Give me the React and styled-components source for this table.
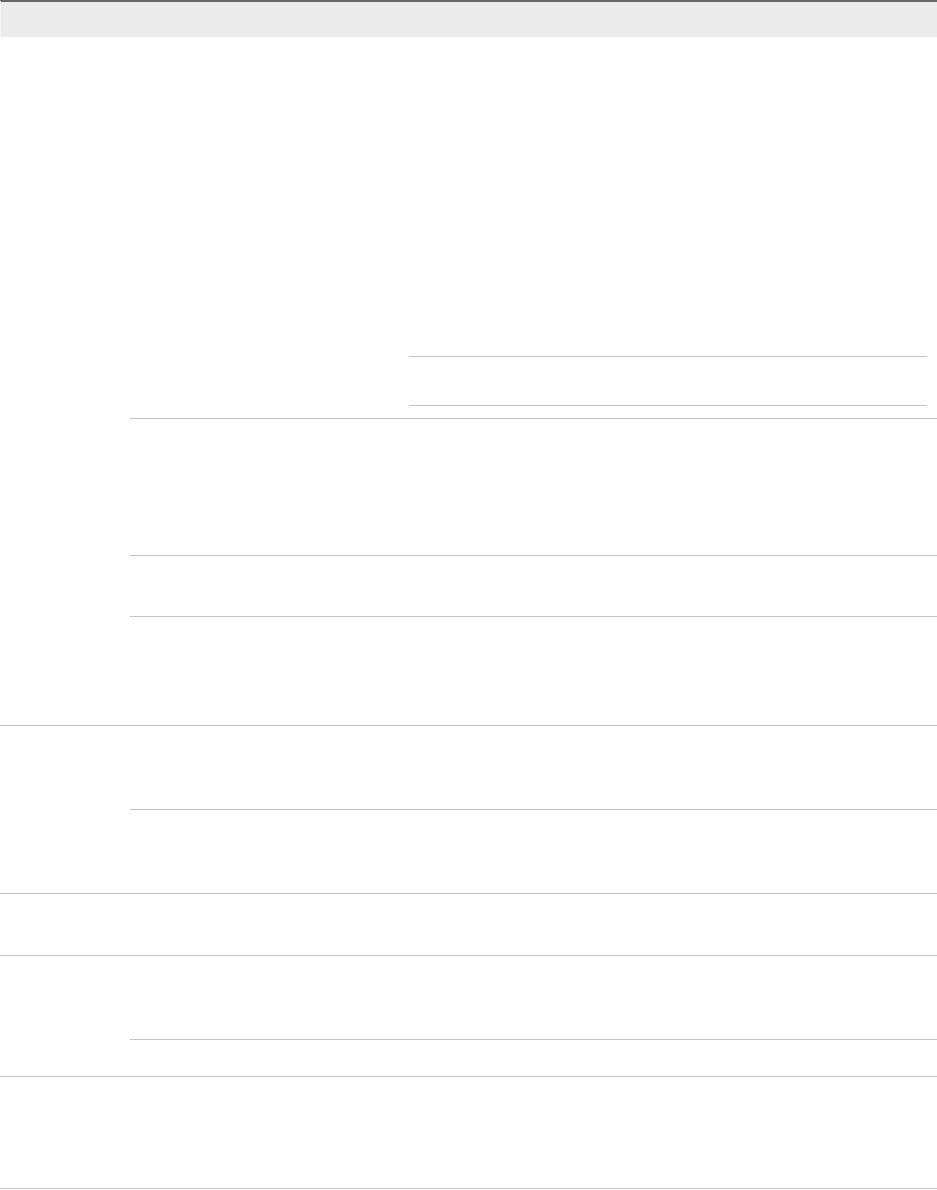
import React from 'react';
import styled, { createGlobalStyle } from 'styled-components';

const GlobalStyle = createGlobalStyle`
  html, body {
    margin: 0;
    padding: 0;
    background: #ffffff;
    font-family: "Liberation Sans", Arial, sans-serif;
  }
  * { box-sizing: border-box; }
`;

const Table = styled.div`
  width: 937px;
  display: flex;
  flex-direction: column;
`;

const Header = styled.div`
  height: 37px;
  background: #ececec;
  border-top: 2px solid #666666;
  border-left: 1px solid #f6f6f6;
`;

const Group = styled.div`
  display: flex;
  border-bottom: 1px solid #c4c4c4;
`;

const KeyCell = styled.div`
  width: 130px;
  flex-shrink: 0;
`;

const Rows = styled.div`
  flex: 1;
  display: flex;
  flex-direction: column;
`;

const Row = styled.div`
  display: flex;
  height: ${({ $h }) => $h}px;
  border-bottom: ${({ $last }) => ($last ? 'none' : '1px solid #c4c4c4')};
`;

const NameCell = styled.div`
  width: 279px;
  flex-shrink: 0;
`;

const ValueCell = styled.div`
  flex: 1;
  display: flex;
  flex-direction: column;
  justify-content: flex-end;
  padding: 0 10px 12px 0;
`;

const Nested = styled.div`
  border-top: 1px solid #c4c4c4;
  border-bottom: 1px solid #c4c4c4;
  height: 50px;
`;

const groups = [
  [382, 137, 61, 108],
  [84, 83],
  [61],
  [84, 36],
  [111],
];

export default function App() {
  return (
    <>
      <GlobalStyle />
      <Table>
        <Header />
        {groups.map((rows, gi) => (
          <Group key={gi}>
            <KeyCell />
            <Rows>
              {rows.map((h, ri) => (
                <Row key={ri} $h={h} $last={ri === rows.length - 1}>
                  <NameCell />
                  <ValueCell>{gi === 0 && ri === 0 && <Nested />}</ValueCell>
                </Row>
              ))}
            </Rows>
          </Group>
        ))}
      </Table>
    </>
  );
}
